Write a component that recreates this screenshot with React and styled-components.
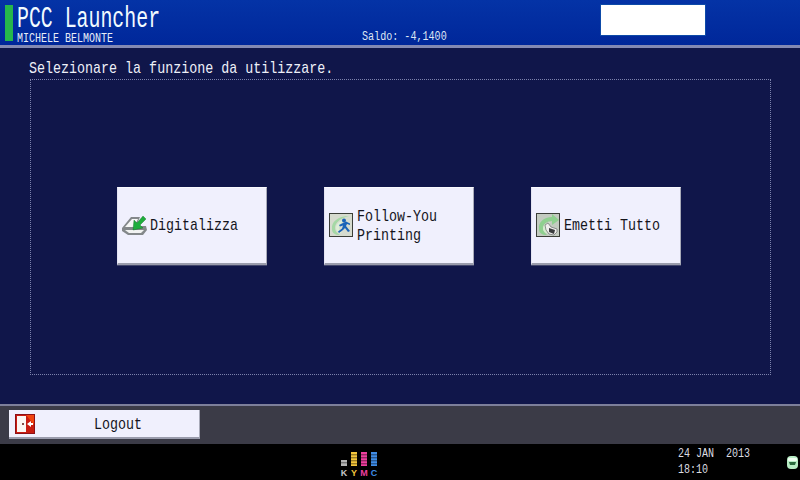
import React from 'react';
import styled, { createGlobalStyle } from 'styled-components';

const Global = createGlobalStyle`
  html, body { margin: 0; padding: 0; background: #000; }
  * { box-sizing: border-box; }
`;
const Screen = styled.div`
  width: 800px; height: 480px; overflow: hidden; display: flex; flex-direction: column;
  font-family: "Liberation Mono", monospace; background: #10164a;
`;
const Header = styled.header`
  height: 48px; flex: none; display: flex; align-items: flex-start;
  background: linear-gradient(#0433a6, #00279a); border-bottom: 3px solid #8389b3; padding: 5px 0 0 5px;
`;
const Accent = styled.div`
  width: 8px; height: 36px; flex: none; background: #26b64c;
`;
const TitleBlock = styled.div`
  width: 349px; flex: none; padding-left: 4px; display: flex; flex-direction: column;
`;
const Title = styled.div`
  height: 27px; color: #f2fbff; font-size: 29px; line-height: 30px; white-space: nowrap;
  transform: scaleX(.685); transform-origin: left center;
`;
const UserName = styled.div`
  margin-top: 1px; color: #e8eef8; font-size: 12px; line-height: 12px; white-space: nowrap;
  transform: scaleX(.833); transform-origin: left center;
`;
const Balance = styled.div`
  width: 239px; flex: none; align-self: flex-start; margin-top: 26px;
  color: #dfe6f4; font-size: 12px; line-height: 13px; white-space: nowrap;
  transform: scaleX(.84); transform-origin: left center;
`;
const WhiteBox = styled.div`
  width: 104px; height: 30px; flex: none; background: #fff; box-shadow: 0 0 0 1px #0d4aa8;
`;
const Main = styled.main`
  height: 356px; flex: none; padding: 11px 29px 29px 30px; display: flex; flex-direction: column;
`;
const Prompt = styled.div`
  height: 20px; flex: none; margin-left: -1px; color: #eef0f8; font-size: 17px; line-height: 20px; white-space: nowrap;
  transform: scaleX(.785); transform-origin: left center;
`;
const Panel = styled.section`
  flex: 1; border: 1px dotted #7c82ac; display: flex; align-items: center; gap: 57px; padding: 0 0 3px 86px;
`;
const FunctionButton = styled.button`
  width: 150px; height: 78px; flex: none;
  background: #f0f0fd; padding: 0 0 0 ${p => p.$pad}px; display: flex; align-items: center; gap: ${p => p.$gap}px;
  border: 0; border-top: 1px solid #fafaff; border-left: 1px solid #e4e4f2;
  border-right: 1px solid #a8aab8; border-bottom: 2px solid #9a9cac;
  box-shadow: 0 1px 0 #42466c;
  font-family: inherit; color: #14141c; text-align: left;
`;
const ButtonLabel = styled.span`
  width: 115px; flex: none; margin-top: 1px; font-size: 17px; line-height: 19px; white-space: pre;
  transform: scaleX(.785); transform-origin: left center;
`;
const IconSvg = styled.svg`
  flex: none; display: block;
`;
const FooterBar = styled.div`
  height: 40px; flex: none; background: #3b3b47; border-top: 2px solid #7d7f9a;
  padding: 4px 0 0 9px;
`;
const LogoutButton = styled.button`
  width: 191px; height: 29px; background: #f0f0fd; border: 0; padding: 0 0 0 6px; display: flex; align-items: center;
  border-bottom: 2px solid #9a9cac; border-right: 1px solid #a8aab8;
  font-family: inherit; color: #14141c;
`;
const LogoutLabel = styled.span`
  margin: 3px 0 0 59px; font-size: 17px; line-height: 18px;
  transform: scaleX(.785); transform-origin: left center;
`;
const StatusBar = styled.footer`
  flex: 1; background: #000; display: flex; padding-left: 340px;
`;
const Clock = styled.div`
  width: 109px; flex: none; margin-left: 300px; padding-top: 2px; color: #dcdce0;
  font-size: 12px; line-height: 16px; white-space: pre;
  transform: scaleX(.833); transform-origin: left center;
`;
const StatusIcon = styled.svg`
  width: 13px; height: 15px; flex: none; margin: 11px 0 0 -1px;
`;
const LogoWrap = styled.svg`
  width: 38px; height: 26px; flex: none; margin-top: 7px; font-family: "Liberation Sans", sans-serif;
`;

const ScanIcon = () => (
  <IconSvg width="26" height="24" viewBox="0 0 26 24">
    <path d="M0 15 9 4h9l-4 9h10l1 4-4 5H6l-6-4z" fill="#84888a" />
    <path d="M3 14l7-8h6l-4 8z" fill="#f7f8f6" />
    <path d="M3 17h19l-3 3H7z" fill="#f2f3f2" />
    <path d="M21 3l3 3-6 6 3 3-10 2 1-10 3 3z" fill="#1fae3c" stroke="#0f6b24" strokeWidth=".4" />
  </IconSvg>
);
const FollowIcon = () => (
  <IconSvg width="24" height="24" viewBox="0 0 24 24">
    <rect x=".5" y=".5" width="23" height="23" fill="#d6dbcf" stroke="#3b3e38" />
    <path d="M3 16C2 9 9 3 20 3 11 5 6 10 6 15c0 3 2 5 5 7C6 22 3 20 3 16z" fill="#a5d8a5" />
    <path d="M7 15c0-4 3-7 9-8-4 2-6 5-6 8 0 2 1 3 3 5-3 0-6-2-6-5z" fill="#dcefd6" />
    <circle cx="15" cy="7.500" r="2" fill="#1a63b8" />
    <path d="M14 10l-4 2 1 1.500 3-1-1 3-4 3 1 1.500 4-3 2-2 3 4 2-1-4-5 1-2 3 1v-1.500l-4-2z" fill="#1a63b8" />
  </IconSvg>
);
const PrintAllIcon = () => (
  <IconSvg width="24" height="24" viewBox="0 0 24 24">
    <rect x=".5" y=".5" width="23" height="23" fill="#c3cbc0" stroke="#3b3e38" />
    <path d="M3 16C2 9 8 4 16 4V1l7 6-7 5V8c-5 0-9 3-9 7 0 3 2 5 4 7-5 0-8-2-8-6z" fill="#8fd08f" />
    <path d="M7 16c0-4 3-6 8-7-3 2-5 4-5 7 0 1 1 3 2 5-3-1-5-3-5-5z" fill="#d5ecce" />
    <path d="M9 12l3-2 3 4 6 2v3l-3 3-5-1-3-4z" fill="#efefec" stroke="#56585a" strokeWidth=".6" />
    <path d="M13 15l6 2-1 4-5-2z" fill="#3a3c3e" />
  </IconSvg>
);
const LogoutIcon = () => (
  <IconSvg width="20" height="20" viewBox="0 0 20 20">
    <rect width="20" height="20" fill="#8e1016" />
    <rect x="1" y="1" width="18" height="18" fill="#c81c10" />
    <path d="M11 1h8v10z" fill="#f0440f" />
    <rect x="2" y="2" width="9" height="16" fill="#fbf6f2" />
    <circle cx="8" cy="10" r="1" fill="#5a1510" />
    <path d="M12 10l4-3v2h2v2h-2v2z" fill="#fff" />
  </IconSvg>
);
const Bar = ({ x, color }) => (
  <>
    <rect x={x} y="1" width="6" height="14" fill={color} />
    {[3.5, 6.5, 9.5, 12.5].map(y => <rect key={y} x={x} y={y} width="6" height=".7" fill="#000" opacity=".75" />)}
  </>
);
const Logo = () => (
  <LogoWrap viewBox="0 0 38 26">
    <rect x="1" y="9" width="6" height="6" fill="#b4b4b4" />
    <rect x="1" y="11.500" width="6" height=".7" fill="#000" opacity=".7" />
    <Bar x={11} color="#f2c53c" />
    <Bar x={21} color="#ee3f9e" />
    <Bar x={31} color="#3f8ce6" />
    <text x="4" y="25" fontSize="9" fontWeight="700" fill="#c8c8c8" textAnchor="middle">K</text>
    <text x="14" y="25" fontSize="9" fontWeight="700" fill="#f2c53c" textAnchor="middle">Y</text>
    <text x="24" y="25" fontSize="9" fontWeight="700" fill="#ee3f9e" textAnchor="middle">M</text>
    <text x="34" y="25" fontSize="9" fontWeight="700" fill="#3f8ce6" textAnchor="middle">C</text>
  </LogoWrap>
);

export default function App() {
  return (
    <Screen>
      <Global />
      <Header>
        <Accent />
        <TitleBlock>
          <Title>PCC Launcher</Title>
          <UserName>MICHELE BELMONTE</UserName>
        </TitleBlock>
        <Balance>Saldo: -4,1400</Balance>
        <WhiteBox />
      </Header>
      <Main>
        <Prompt>Selezionare la funzione da utilizzare.</Prompt>
        <Panel>
          <FunctionButton $pad={4} $gap={2}><ScanIcon /><ButtonLabel>Digitalizza</ButtonLabel></FunctionButton>
          <FunctionButton $pad={4} $gap={4}><FollowIcon /><ButtonLabel>{'Follow-You\nPrinting'}</ButtonLabel></FunctionButton>
          <FunctionButton $pad={4} $gap={4}><PrintAllIcon /><ButtonLabel>Emetti Tutto</ButtonLabel></FunctionButton>
        </Panel>
      </Main>
      <FooterBar>
        <LogoutButton><LogoutIcon /><LogoutLabel>Logout</LogoutLabel></LogoutButton>
      </FooterBar>
      <StatusBar>
        <Logo />
        <Clock>{'24 JAN  2013\n18:10'}</Clock>
        <StatusIcon viewBox="0 0 13 15">
          <rect x="1" y="1" width="11" height="13" rx="4" fill="#b8ecc4" />
          <rect x="2" y="3" width="9" height="3" rx="1" fill="#f0fff2" />
          <path d="M3 7h7l-1 3H4z" fill="#2a6a3c" />
        </StatusIcon>
      </StatusBar>
    </Screen>
  );
}
